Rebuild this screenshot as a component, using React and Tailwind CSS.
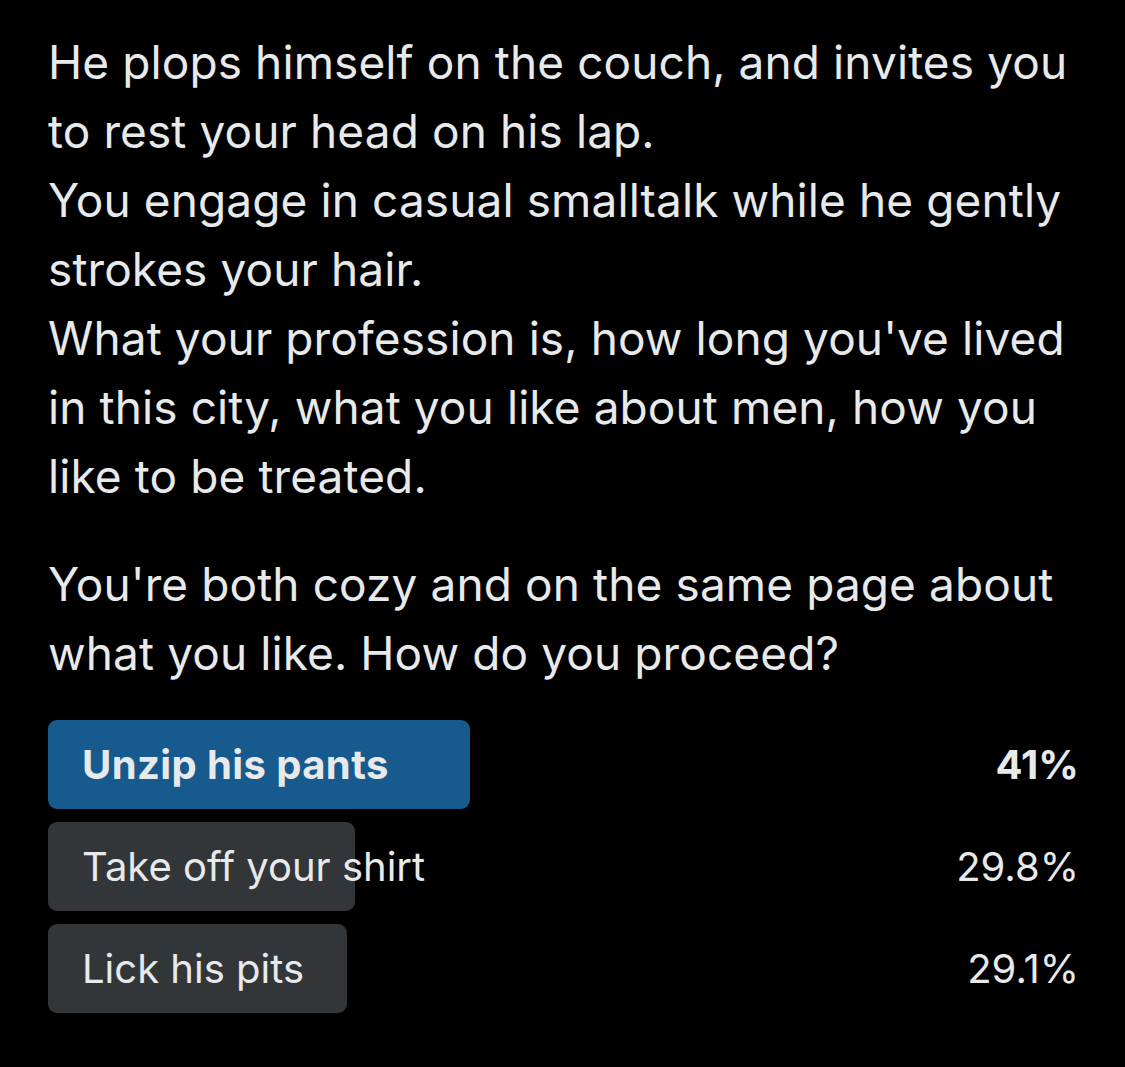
export default function App() {
  const font = { fontFamily: 'Inter, "Noto Sans", sans-serif' };
  const lines1 = [
    "He plops himself on the couch, and invites you",
    "to rest your head on his lap.",
    "You engage in casual smalltalk while he gently",
    "strokes your hair.",
    "What your profession is, how long you've lived",
    "in this city, what you like about men, how you",
    "like to be treated.",
  ];
  const lines2 = [
    "You're both cozy and on the same page about",
    "what you like. How do you proceed?",
  ];
  const opts = [
    { label: "Unzip his pants", pct: "41%", w: 422, win: true },
    { label: "Take off your shirt", pct: "29.8%", w: 307 },
    { label: "Lick his pits", pct: "29.1%", w: 299 },
  ];
  return (
    <div className="w-[1125px] h-[1067px] bg-black text-[#e7e9ea] overflow-hidden" style={font}>
      <div className="pl-[48px] pr-[49px] pt-[28px]">
        <div className="text-[46px] leading-[69px] tracking-[0.1px]">
          {lines1.map((l, i) => (
            <div key={i} className="whitespace-nowrap">{l}</div>
          ))}
        </div>
        <div className="mt-[39px] text-[46px] leading-[69px] tracking-[0.1px]">
          {lines2.map((l, i) => (
            <div key={i} className="whitespace-nowrap">{l}</div>
          ))}
        </div>
        <div className="mt-[32px] flex flex-col gap-[13px]">
          {opts.map((o, i) => (
            <div key={i} className="relative h-[89px] flex items-center">
              <div
                className={`absolute left-0 top-0 h-full rounded-[9px] ${o.win ? "bg-[#175a8d]" : "bg-[#333639]"}`}
                style={{ width: o.w }}
              />
              <div className={`relative pl-[34px] text-[40px] whitespace-nowrap ${o.win ? "font-bold tracking-[0.4px]" : ""}`}>
                {o.label}
              </div>
              <div className={`relative ml-auto mr-[-3px] text-[40px] ${o.win ? "font-bold" : ""}`}>{o.pct}</div>
            </div>
          ))}
        </div>
      </div>
    </div>
  );
}
